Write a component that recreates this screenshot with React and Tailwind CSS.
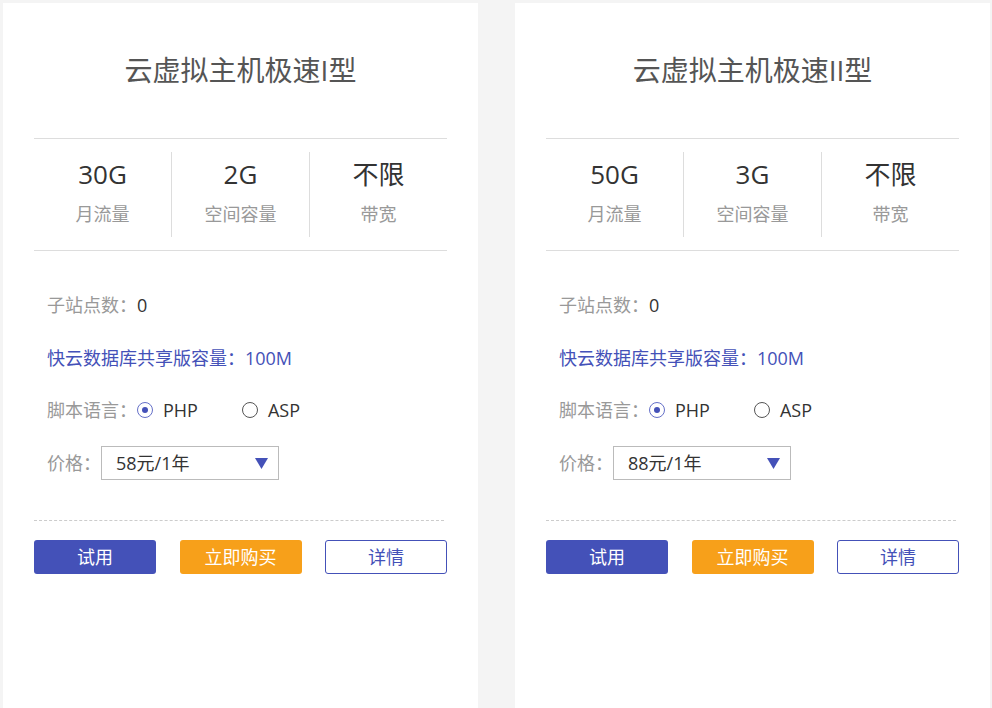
const plans = [
  { name: "云虚拟主机极速I型", flow: "30G", space: "2G", db: "100M", price: "58元/1年" },
  { name: "云虚拟主机极速II型", flow: "50G", space: "3G", db: "300M", price: "88元/1年" },
];

const Stat = ({ value, label, border }) => (
  <div className={`flex-1 flex flex-col items-center ${border ? "border-r border-[#dddddd]" : ""}`}>
    <span className="text-[26px] leading-[32px] text-[#333] mt-[6px]">{value}</span>
    <span className="text-[18px] leading-[24px] text-[#999] mt-[12px]">{label}</span>
  </div>
);

const Card = ({ p }) => (
  <div className="w-[475px] bg-white px-[31px] h-[705px]">
    <div className="h-[135px] flex items-center justify-center text-[28px] text-[#555] pb-[2px]">{p.name}</div>
    <div className="border-y border-[#dddddd] py-[13px] flex h-[113px]">
      <Stat value={p.flow} label="月流量" border />
      <Stat value={p.space} label="空间容量" border />
      <Stat value={p.name.includes("II") ? "不限" : "不限"} label="带宽" />
    </div>
    <div className="px-[13px] text-[18px] leading-[24px]">
      <div className="mt-[42px] text-[#999]">子站点数：<span className="text-[#333]">0</span></div>
      <div className="mt-[29px] text-[#4451b8]">快云数据库共享版容量：100M</div>
      <div className="mt-[28px] flex items-center text-[#999]">
        脚本语言：
        <span className="w-[16px] h-[16px] rounded-full border border-[#6570c8] flex items-center justify-center">
          <span className="w-[6px] h-[6px] rounded-full bg-[#4451b8]" />
        </span>
        <span className="ml-[10px] text-[#333]">PHP</span>
        <span className="ml-[44px] w-[16px] h-[16px] rounded-full border-[1.5px] border-[#555]" />
        <span className="ml-[10px] text-[#333]">ASP</span>
      </div>
      <div className="mt-[24px] flex items-center text-[#999]">
        价格：
        <div className="w-[178px] h-[34px] border border-[#bbbbbb] flex items-center justify-between pl-[14px] pr-[10px] text-[#333]">
          <span>{p.price}</span>
          <svg width="13" height="11" viewBox="0 0 13 11"><path d="M0 0h13L6.5 11z" fill="#4451b8" /></svg>
        </div>
      </div>
    </div>
    <div className="mt-[40px] border-t border-dashed border-[#cccccc] mr-[3px]" />
    <div className="mt-[19px] flex justify-between text-[18px]">
      <button className="w-[122px] h-[34px] rounded-[3px] bg-[#4451b8] text-white">试用</button>
      <button className="w-[122px] h-[34px] rounded-[3px] bg-[#f7a01a] text-white">立即购买</button>
      <button className="w-[122px] h-[34px] rounded-[3px] border border-[#4451b8] text-[#4451b8]">详情</button>
    </div>
  </div>
);

export default function App() {
  return (
    <div className="w-[992px] h-[708px] overflow-hidden bg-[#f4f4f4] flex gap-[37px] pl-[3px] pt-[3px]" style={{ fontFamily: '"Open Sans","Noto Sans CJK SC",sans-serif' }}>
      {plans.map((p, i) => (
        <Card key={i} p={{ ...p }} />
      ))}
    </div>
  );
}
